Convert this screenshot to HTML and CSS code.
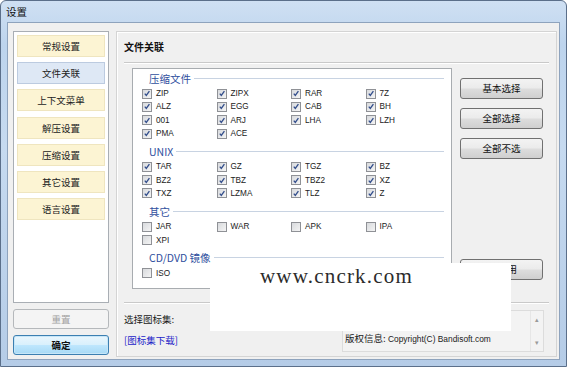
FILE: index.html
```html
<!DOCTYPE html>
<html lang="zh-CN">

<head>
    <meta charset="UTF-8" />
    <meta name="viewport" content="width=device-width, initial-scale=1.0" />
    <title>设置</title>
    <link rel="stylesheet" href="styles.css">
</head>

<body>

    <div class="window">
        <div class="titlebar">设置</div>

        <div class="client">

            <!-- left: page list + bottom buttons -->
            <div class="side">
                <div class="nav">
                    <div class="nav-btn">常规设置</div>
                    <div class="nav-btn active">文件关联</div>
                    <div class="nav-btn">上下文菜单</div>
                    <div class="nav-btn">解压设置</div>
                    <div class="nav-btn">压缩设置</div>
                    <div class="nav-btn">其它设置</div>
                    <div class="nav-btn">语言设置</div>
                </div>
                <div class="btn side-btn disabled">重置</div>
                <div class="btn side-btn default">确定</div>
            </div>

            <!-- right: file association page -->
            <div class="page">
                <h2 class="page-title">文件关联</h2>
                <div class="sep"></div>

                <div class="main-row">
                    <div class="groupbox" id="groups"></div>

                    <div class="actions">
                        <div class="btn act-btn">基本选择</div>
                        <div class="btn act-btn">全部选择</div>
                        <div class="btn act-btn">全部不选</div>
                        <div class="btn act-btn apply">应用</div>
                    </div>
                </div>

                <div class="sep bottom-sep"></div>

                <div class="info-row">
                    <div class="iconset">
                        <div class="iconset-label">选择图标集:</div>
                        <a class="iconset-link">[图标集下载]</a>
                    </div>
                    <div class="about">
                        <div class="about-text">
                            <div>软件作者: Bandisoft</div>
                            <div><span class="cjk">版权信息:</span> Copyright(C) Bandisoft.com</div>
                        </div>
                        <div class="scroll">
                            <span>&#9652;</span>
                            <span>&#9662;</span>
                        </div>
                    </div>
                </div>
            </div>

        </div>

        <div class="watermark">www.cncrk.com</div>
    </div>

    <script>
        const GROUPS = [
            { name: "压缩文件", on: true, items: ["ZIP", "ZIPX", "RAR", "7Z", "ALZ", "EGG", "CAB", "BH", "001", "ARJ", "LHA", "LZH", "PMA", "ACE"] },
            { name: "UNIX", on: true, items: ["TAR", "GZ", "TGZ", "BZ", "BZ2", "TBZ", "TBZ2", "XZ", "TXZ", "LZMA", "TLZ", "Z"] },
            { name: "其它", on: false, items: ["JAR", "WAR", "APK", "IPA", "XPI"] },
            { name: "CD/DVD 镜像", on: false, items: ["ISO"] }
        ];

        const tick = '<svg viewBox="0 0 9 9" width="9" height="9"><path d="M2 4.6 L3.7 6.6 L7.2 1.8" fill="none" stroke="#344f8c" stroke-width="1.5"/></svg>';

        document.getElementById('groups').innerHTML = GROUPS.map(g => `
<div class="section">
<div class="section-head"><span>${g.name}</span></div>
<div class="checks">
${g.items.map(i => `<div class="check"><span class="box">${g.on ? tick : ''}</span>${i}</div>`).join('')}
</div>
</div>`).join('');
    </script>

</body>

</html>
```

FILE: styles.css
```css
:root {
    --frame: #bcd2ec;
    --client: #f0f0f0;
    --line: #d0d0d0;
    --head: #2f4f9e;
    --cjk: "Noto Sans CJK SC", "Noto Sans", sans-serif;
    --latin: "Liberation Sans", "Noto Sans CJK SC", sans-serif;
}

* {
    box-sizing: border-box
}

body {
    margin: 0;
    width: 567px;
    height: 367px;
    overflow: hidden;
    font-family: var(--cjk);
    font-size: 9.5px;
    color: #1a1a1a;
    background: #fff;
}

.window {
    position: relative;
    height: 367px;
    display: flex;
    flex-direction: column;
    border: 1px solid #5b6f8a;
    border-radius: 6px 6px 0 0;
    background: linear-gradient(180deg, #cfe0f3 0%, #bdd4ed 12%, #c6daf0 40%, #b5cce7 100%);
}

.titlebar {
    height: 21px;
    line-height: 22px;
    padding-left: 5px;
    font-size: 10.5px;
    color: #111;
}

.client {
    flex: 1;
    display: flex;
    gap: 7px;
    margin: 0 6px 6px;
    padding: 8px 2px 2px 5px;
    background: var(--client);
    border: 1px solid #8ea3bd;
}

/* ---------- left column ---------- */
.side {
    width: 96px;
    display: flex;
    flex-direction: column;
}

.nav {
    height: 272px;
    background: #fff;
    border: 1px solid #a9aeb4;
    padding: 3px 3px;
    display: flex;
    flex-direction: column;
    gap: 5.2px;
}

.nav-btn {
    height: 22px;
    line-height: 21px;
    text-align: center;
    background: #fcf4d3;
    border: 1px solid #efe5bf;
    color: #222;
}

.nav-btn.active {
    background: #dee8f5;
    border-color: #bccbe0;
}

.btn {
    text-align: center;
    border: 1px solid #707070;
    border-radius: 3px;
    background: linear-gradient(180deg, #f3f3f3 0%, #ebebeb 48%, #dddddd 52%, #cfcfcf 100%);
    color: #111;
}

.side-btn {
    height: 20px;
    line-height: 18px;
    margin-top: 6px;
}

.side-btn.disabled {
    background: #f4f4f4;
    border-color: #b5b8bb;
    color: #a2a2a2;
}

.side-btn.default {
    border-color: #3c7fb1;
    background: linear-gradient(180deg, #eaf6fd 0%, #d9f0fc 48%, #bee6fd 52%, #a7d9f5 100%);
    box-shadow: inset 0 0 0 1px #c6e6f8;
    font-weight: bold;
}

/* ---------- right page ---------- */
.page {
    flex: 1;
    display: flex;
    flex-direction: column;
    padding: 6px 7px 0;
    border: 1px solid #d4d4d4;
    box-shadow: inset 1px 1px 0 #fff;
}

.page-title {
    margin: 0;
    height: 18px;
    line-height: 18px;
    font-size: 10px;
    font-weight: bold;
    color: #111;
}

.sep {
    height: 2px;
    margin-top: 6px;
    border-top: 1px solid #c9c9c9;
    border-bottom: 1px solid #fff;
}

.main-row {
    display: flex;
    gap: 8px;
    margin-top: 4px;
}

.groupbox {
    width: 320px;
    height: 221px;
    margin-left: 8px;
    background: #fff;
    border: 1px solid #a8acb0;
    padding: 1px 7px 0 9px;
}

.section {
    margin-bottom: 3px;
}

.section-head {
    height: 16px;
    display: flex;
    align-items: center;
    gap: 3px;
    padding-left: 7px;
    font-size: 10.5px;
    color: var(--head);
}

.section-head::after {
    content: "";
    flex: 1;
    height: 1px;
    background: #c8d3e2;
}

.checks {
    margin-top: 1px;
    display: grid;
    grid-template-columns: repeat(4, 74.5px);
    grid-auto-rows: 13.3px;
}

.check {
    display: flex;
    align-items: center;
    gap: 4px;
    font-family: var(--latin);
    font-size: 8.2px;
    color: #222;
}

.box {
    width: 10px;
    height: 10px;
    flex: none;
    display: flex;
    align-items: center;
    justify-content: center;
    border: 1px solid #8f9196;
    background: linear-gradient(135deg, #d8dadd, #f4f4f4);
}

.actions {
    width: 83px;
    display: flex;
    flex-direction: column;
    gap: 9px;
    padding: 10px 0 9px;
}

.act-btn {
    height: 21px;
    line-height: 19px;
}

.act-btn.apply {
    margin-top: auto;
    padding-left: 12px;
}

.bottom-sep {
    margin-top: 13px;
}

.info-row {
    display: flex;
    margin-top: 6px;
}

.iconset {
    display: flex;
    flex-direction: column;
    gap: 3px;
}

.iconset-label,
.iconset-link {
    line-height: 18px;
}

.iconset-link {
    color: #2323c8;
}

.about {
    margin-left: auto;
    margin-right: 5px;
    width: 202px;
    height: 42px;
    display: flex;
    border: 1px solid #dcdcdc;
    background: #f3f3f3;
}

.about-text {
    flex: 1;
    padding: 8px 0 0 2px;
    font-family: var(--latin);
    font-size: 8.4px;
    line-height: 13px;
    color: #222;
}

.about-text .cjk {
    font-family: var(--cjk);
    font-size: 9.5px;
}

.scroll {
    width: 13px;
    display: flex;
    flex-direction: column;
    justify-content: space-between;
    align-items: center;
    padding: 3px 0 4px;
    border-left: 1px solid #e6e6e6;
    font-size: 7px;
    color: #9a9a9a;
}

/* overlay stamped over the screenshot */
.watermark {
    position: absolute;
    left: 209px;
    top: 262px;
    width: 301px;
    height: 68px;
    background: #fff;
    padding: 3px 0 0 50px;
    font-family: "Liberation Serif", serif;
    font-size: 21px;
    line-height: 20px;
    letter-spacing: 1.2px;
    color: #2b2b2b;
}
```
